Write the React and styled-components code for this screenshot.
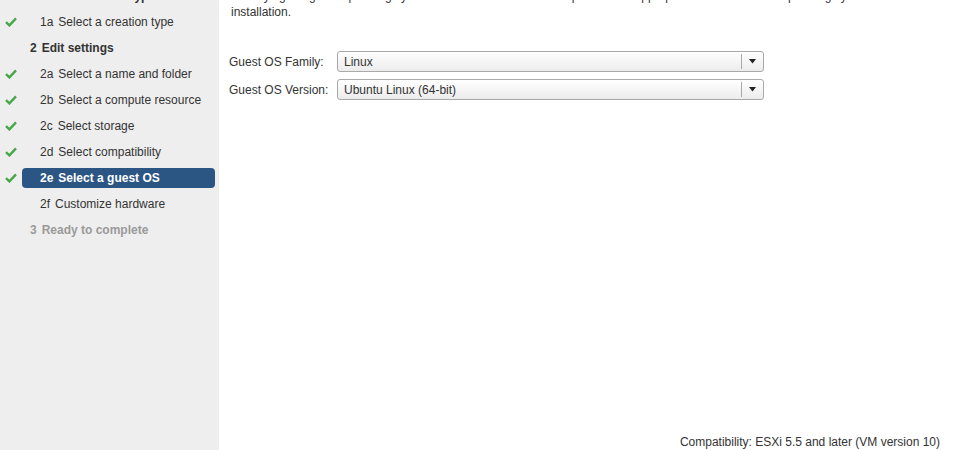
import React from "react";
import styled, { createGlobalStyle } from "styled-components";

const Global = createGlobalStyle`
  html, body { margin: 0; padding: 0; background: #fff; }
  body { font-family: "Liberation Sans", Arial, sans-serif; font-size: 12px; color: #333; }
  #root { width: 956px; height: 450px; overflow: hidden; }
`;

const Page = styled.div`
  display: flex;
  width: 956px;
  height: 450px;
  overflow: hidden;
`;

const Sidebar = styled.nav`
  width: 219px;
  flex: none;
  background: #eeeeee;
  overflow: hidden;
`;

const StepList = styled.ul`
  list-style: none;
  margin: -17px 0 0 0;
  padding: 0;
`;

const StepRow = styled.li`
  display: flex;
  align-items: center;
  height: 26px;
`;

const CheckCell = styled.span`
  width: 22px;
  flex: none;
  display: flex;
  justify-content: center;
  align-items: center;
`;

const StepLabel = styled.span`
  display: flex;
  align-items: center;
  height: 20px;
  flex: 1;
  margin-right: 4px;
  border-radius: 4px;
  padding-left: ${(p) => (p.$sub ? "18px" : "8px")};
  font-weight: ${(p) => (p.$bold ? "bold" : "normal")};
  color: ${(p) => (p.$selected ? "#fff" : p.$muted ? "#9a9a9a" : "#333")};
  background: ${(p) => (p.$selected ? "#2b5683" : "transparent")};
  white-space: nowrap;
`;

const StepNum = styled.span`
  margin-right: 5px;
`;

const Main = styled.main`
  flex: 1;
  display: flex;
  flex-direction: column;
  background: #fff;
  padding: 0 16px 0 12px;
`;

const Intro = styled.p`
  margin: -12px 0 0 0;
  line-height: 16px;
  width: 660px;
`;

const Form = styled.div`
  display: flex;
  flex-direction: column;
  gap: 7px;
  margin-top: 31px;
  margin-left: -2px;
`;

const FormRow = styled.div`
  display: flex;
  align-items: center;
`;

const Label = styled.span`
  width: 108px;
  flex: none;
`;

const Select = styled.div`
  width: 427px;
  height: 21px;
  box-sizing: border-box;
  border: 1px solid #a9a9a9;
  border-radius: 3px;
  background: linear-gradient(#ffffff, #ececec);
  display: flex;
  align-items: stretch;
`;

const SelectValue = styled.span`
  flex: 1;
  display: flex;
  align-items: center;
  padding-left: 6px;
  color: #333;
`;

const SelectArrow = styled.span`
  width: 21px;
  display: flex;
  align-items: center;
  justify-content: center;
  border-left: 1px solid #a9a9a9;
  margin: 2px 0;
`;

const Spacer = styled.div`
  flex: 1;
`;

const Footer = styled.div`
  text-align: right;
  line-height: 16px;
  height: 16px;
`;

const Check = () => (
  <svg width="12" height="10" viewBox="0 0 12 10">
    <path d="M1 5.2 L4.4 8.4 L11 1.4" fill="none" stroke="#46a846" strokeWidth="2.4" />
  </svg>
);

const Arrow = () => (
  <svg width="7" height="5" viewBox="0 0 7 5">
    <path d="M0 0 H7 L3.5 4.5 Z" fill="#222" />
  </svg>
);

const steps = [
  { num: "1", text: "Select creation type", bold: true },
  { num: "1a", text: "Select a creation type", sub: true, done: true },
  { num: "2", text: "Edit settings", bold: true },
  { num: "2a", text: "Select a name and folder", sub: true, done: true },
  { num: "2b", text: "Select a compute resource", sub: true, done: true },
  { num: "2c", text: "Select storage", sub: true, done: true },
  { num: "2d", text: "Select compatibility", sub: true, done: true },
  { num: "2e", text: "Select a guest OS", sub: true, done: true, selected: true },
  { num: "2f", text: "Customize hardware", sub: true },
  { num: "3", text: "Ready to complete", bold: true, muted: true },
];

export default function App() {
  return (
    <>
      <Global />
      <Page>
        <Sidebar>
          <StepList>
            {steps.map((s) => (
              <StepRow key={s.num}>
                <CheckCell>{s.done ? <Check /> : null}</CheckCell>
                <StepLabel $sub={s.sub} $bold={s.bold || s.selected} $selected={s.selected} $muted={s.muted}>
                  <StepNum>{s.num}</StepNum>
                  {s.text}
                </StepLabel>
              </StepRow>
            ))}
          </StepList>
        </Sidebar>
        <Main>
          <Intro>
            Identifying the guest operating system here allows the wizard to provide the appropriate defaults for the operating system
            installation.
          </Intro>
          <Form>
            <FormRow>
              <Label>Guest OS Family:</Label>
              <Select>
                <SelectValue>Linux</SelectValue>
                <SelectArrow><Arrow /></SelectArrow>
              </Select>
            </FormRow>
            <FormRow>
              <Label>Guest OS Version:</Label>
              <Select>
                <SelectValue>Ubuntu Linux (64-bit)</SelectValue>
                <SelectArrow><Arrow /></SelectArrow>
              </Select>
            </FormRow>
          </Form>
          <Spacer />
          <Footer>Compatibility: ESXi 5.5 and later (VM version 10)</Footer>
        </Main>
      </Page>
    </>
  );
}
